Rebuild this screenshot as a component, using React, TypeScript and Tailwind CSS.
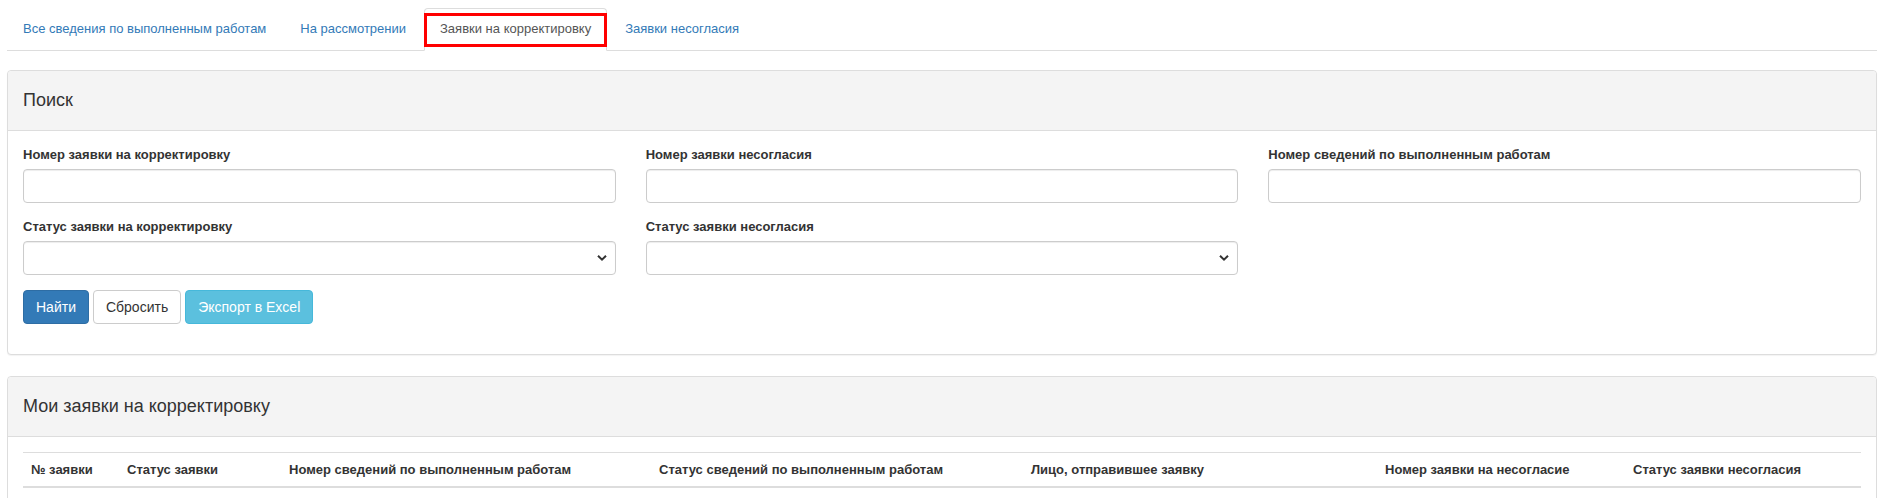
import React from "react";

const font = { fontFamily: '"Liberation Sans", Arial, sans-serif' };

function Chevron() {
  return (
    <svg width="10" height="7" viewBox="0 0 10 7" className="absolute right-[8px] top-1/2 -translate-y-1/2">
      <path d="M1 1.2 L5 5.2 L9 1.2" fill="none" stroke="#333" strokeWidth="2" />
    </svg>
  );
}

function Field({ label, select }: { label: string; select?: boolean }) {
  return (
    <div className="mb-[15px]">
      <label className="block text-[13px] leading-[18px] font-bold text-[#333] mb-[5px]">{label}</label>
      <div className="relative h-[34px] border border-[#ccc] rounded-[4px] bg-white shadow-[inset_0_1px_1px_rgba(0,0,0,0.075)]">
        {select && <Chevron />}
      </div>
    </div>
  );
}

export default function App() {
  const tabs = [
    "Все сведения по выполненным работам",
    "На рассмотрении",
    "Заявки на корректировку",
    "Заявки несогласия",
  ];
  const cols: [string, string][] = [
    ["№ заявки", "w-[96px]"],
    ["Статус заявки", "w-[162px]"],
    ["Номер сведений по выполненным работам", "w-[370px]"],
    ["Статус сведений по выполненным работам", "w-[372px]"],
    ["Лицо, отправившее заявку", "w-[354px]"],
    ["Номер заявки на несогласие", "w-[248px]"],
    ["Статус заявки несогласия", ""],
  ];
  return (
    <div className="bg-white min-h-[600px] pl-[7px] pr-[3px]" style={font}>
      <div className="flex border-b border-[#ddd] pt-[8px] text-[13px]">
        {tabs.map((t, i) =>
          i === 2 ? (
            <div key={t} className="relative mr-[2px] -mb-px px-[15px] leading-[20px] py-[10px] border border-[#ddd] border-b-white rounded-t-[4px] bg-white text-[#555]">
              {t}
              <div className="absolute -left-[1px] -right-[1px] top-[4px] bottom-[3px] border-[3px] border-[#ff0000]" />
            </div>
          ) : (
            <div key={t} className="mr-[2px] px-[15px] py-[10px] leading-[20px] border border-transparent text-[#337ab7]">
              {t}
            </div>
          )
        )}
      </div>

      <div className="mt-[19px] border border-[#ddd] rounded-[4px] bg-white shadow-[0_1px_1px_rgba(0,0,0,0.05)]">
        <div className="h-[60px] bg-[#f4f4f4] border-b border-[#ddd] rounded-t-[4px] px-[15px] flex items-center text-[18px] text-[#333]">
          Поиск
        </div>
        <div className="p-[15px]">
          <div className="grid grid-cols-3 gap-x-[30px]">
            <Field label="Номер заявки на корректировку" />
            <Field label="Номер заявки несогласия" />
            <Field label="Номер сведений по выполненным работам" />
            <Field label="Статус заявки на корректировку" select />
            <Field label="Статус заявки несогласия" select />
            <div />
          </div>
          <div className="flex gap-[4px] mb-[15px] text-[14px]">
            <button className="h-[34px] px-[12px] rounded-[4px] bg-[#337ab7] border border-[#2e6da4] text-white">Найти</button>
            <button className="h-[34px] px-[12px] rounded-[4px] bg-white border border-[#ccc] text-[#333]">Сбросить</button>
            <button className="h-[34px] px-[12px] rounded-[4px] bg-[#5bc0de] border border-[#46b8da] text-white">Экспорт в Excel</button>
          </div>
        </div>
      </div>

      <div className="mt-[21px] border border-[#ddd] rounded-[4px] bg-white">
        <div className="h-[60px] bg-[#f4f4f4] border-b border-[#ddd] rounded-t-[4px] px-[15px] flex items-center text-[18px] text-[#333]">
          Мои заявки на корректировку
        </div>
        <div className="p-[15px]">
          <table className="w-full border-collapse text-[13px] text-[#333]">
            <thead>
              <tr className="border-t border-[#ddd] border-b-2">
                {cols.map(([c, w]) => (
                  <th key={c} className={`${w} text-left font-bold px-[8px] py-[8px] leading-[17px]`}>
                    {c}
                  </th>
                ))}
              </tr>
            </thead>
            <tbody>
              <tr className="border-b border-[#ddd]">
                {cols.map(([c]) => (
                  <td key={c} className="px-[8px] py-[8px] leading-[18px]">&nbsp;</td>
                ))}
              </tr>
            </tbody>
          </table>
        </div>
      </div>
    </div>
  );
}
